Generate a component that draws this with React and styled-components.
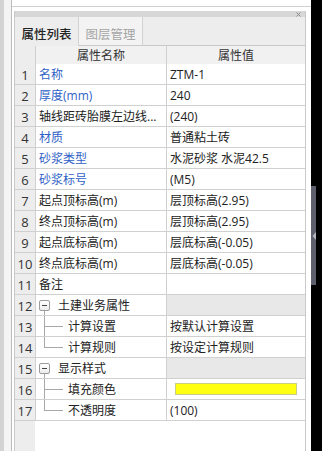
import styled, { createGlobalStyle } from 'styled-components';

const GlobalStyle = createGlobalStyle`
	html, body {
		margin: 0;
		padding: 0;
		background: #fff;
		overflow: hidden;
	}
	body {
		font-family: "Open Sans", "Noto Sans CJK SC", sans-serif;
		font-size: 12px;
		color: #222;
	}
`;

const Screen = styled.div`
	width: 322px;
	height: 451px;
	display: flex;
`;

const Gutter = styled.div`
	width: 4px;
	background: #d3d3d3;
`;

const Side = styled.div`
	width: 7px;
	background: #f4f4f4;
`;

const Main = styled.div`
	flex: 1;
	display: flex;
	flex-direction: column;
	border-left: 1px solid #bcbcbc;
	background: #fff;
`;

const TopBox = styled.div`
	height: 6px;
	border-bottom: 1px solid #d0d0d0;
	background: #fff;
`;

const Panel = styled.div`
	flex: 1;
	margin: 4px 5px 0 2px;
	display: flex;
	flex-direction: column;
	border-left: 1px solid #c9c9c9;
	border-right: 1px solid #c9c9c9;
	min-height: 0;
`;

const TitleBar = styled.div`
	height: 6px;
	background: #d7d7d7;
	display: flex;
	justify-content: flex-end;
	align-items: center;
	padding-right: 4px;
`;

const TabStrip = styled.div`
	height: 29px;
	display: flex;
	background: #ededed;
`;

const Tab = styled.div`
	width: ${props => props.active ? '64px' : '64px'};
	display: flex;
	align-items: center;
	justify-content: center;
	padding-top: 4px;
	box-sizing: border-box;
	font-size: 12.5px;
	font-weight: ${props => props.active ? 500 : 400};
	color: ${props => props.active ? '#222' : '#a5a5a5'};
	background: ${props => props.active ? '#ededed' : '#f3f3f3'};
	border-right: 1px solid #d2d2d2;
	border-bottom: ${props => props.active ? 'none' : '1px solid #c9c9c9'};
`;

const TabRest = styled.div`
	flex: 1;
	border-bottom: 1px solid #c9c9c9;
`;

const Row = styled.div`
	display: grid;
	grid-template-columns: 21px 131px 1fr;
	height: ${props => props.header ? '18px' : '21px'};
	box-sizing: border-box;
	border-bottom: 1px solid #d0d0d0;
`;

const NumCell = styled.div`
	background: #ededed;
	border-right: 1px solid #d0d0d0;
	display: flex;
	align-items: center;
	justify-content: center;
	font-size: 13px;
	color: #333;
	padding-top: 1px;
`;

const HeadCell = styled.div`
	background: #f1f1f1;
	border-right: ${props => props.last ? 'none' : '1px solid #d0d0d0'};
	display: flex;
	align-items: center;
	justify-content: center;
	font-size: 12px;
	color: #333;
`;

const NameCell = styled.div`
	position: relative;
	border-right: 1px solid #d0d0d0;
	display: flex;
	align-items: center;
	padding-left: ${props => props.child ? '32px' : '3px'};
	white-space: nowrap;
	overflow: hidden;
	color: ${props => props.blue ? '#2f5fc6' : '#222'};

	${props => props.child && `
		&::before {
			content: '';
			position: absolute;
			left: 8px;
			top: 0;
			width: 1px;
			height: ${props.lastChild ? '50%' : '100%'};
			background: #a8a8a8;
		}
		&::after {
			content: '';
			position: absolute;
			left: 8px;
			top: 50%;
			width: 19px;
			height: 1px;
			background: #a8a8a8;
		}
	`}

	${props => props.group && `
		&::after {
			content: '';
			position: absolute;
			left: 8px;
			top: calc(50% + 6px);
			bottom: 0;
			width: 1px;
			background: #a8a8a8;
		}
	`}
`;

const Label = styled.span`
	margin-left: ${props => props.offset || 0}px;
`;

const ExpandBox = styled.span`
	width: 11px;
	height: 11px;
	box-sizing: border-box;
	border: 1px solid #9c9c9c;
	border-radius: 2px;
	background: linear-gradient(#ffffff, #ececec);
	display: flex;
	align-items: center;
	justify-content: center;
	flex-shrink: 0;

	&::before {
		content: '';
		width: 5px;
		height: 1px;
		background: #444;
	}
`;

const ValueCell = styled.div`
	display: flex;
	align-items: center;
	padding-left: 3px;
	white-space: nowrap;
	overflow: hidden;
	background: ${props => props.group ? '#e8e8e8' : '#fff'};
`;

const ColorBar = styled.div`
	flex: 1;
	height: 12px;
	margin: 0 8px 0 5px;
	box-sizing: border-box;
	border: 1px solid #cccc88;
	background: #ffff12;
`;

const Filler = styled.div`
	flex: 1;
	display: grid;
	grid-template-columns: 20px 1fr;
`;

const FillerNum = styled.div`
	background: #ededed;
`;

const Rail = styled.div`
	width: 11px;
	background: #000;
	padding-top: 186px;
	box-sizing: border-box;
`;

const Grip = styled.div`
	width: 5px;
	height: 99px;
	background: #5d5f6d;
	display: flex;
	align-items: center;
	justify-content: flex-end;
`;

const rows = [
	{ name: '名称', value: 'ZTM-1', blue: true },
	{ name: '厚度(mm)', value: '240', blue: true },
	{ name: '轴线距砖胎膜左边线...', value: '(240)' },
	{ name: '材质', value: '普通粘土砖', blue: true },
	{ name: '砂浆类型', value: '水泥砂浆 水泥42.5', blue: true },
	{ name: '砂浆标号', value: '(M5)', blue: true },
	{ name: '起点顶标高(m)', value: '层顶标高(2.95)' },
	{ name: '终点顶标高(m)', value: '层顶标高(2.95)' },
	{ name: '起点底标高(m)', value: '层底标高(-0.05)' },
	{ name: '终点底标高(m)', value: '层底标高(-0.05)' },
	{ name: '备注', value: '' },
	{ name: '土建业务属性', value: '', group: true },
	{ name: '计算设置', value: '按默认计算设置', child: true },
	{ name: '计算规则', value: '按设定计算规则', child: true, lastChild: true },
	{ name: '显示样式', value: '', group: true },
	{ name: '填充颜色', color: true, child: true },
	{ name: '不透明度', value: '(100)', child: true, lastChild: true },
];

const App = () => {
	return (
		<>
			<GlobalStyle />
			<Screen>
				<Gutter />
				<Side />
				<Main>
					<TopBox />
					<Panel>
						<TitleBar>
							<svg width="5" height="5" viewBox="0 0 5 5">
								<path d="M0.5 0.5 L4.5 4.5 M4.5 0.5 L0.5 4.5" stroke="#8a8a8a" strokeWidth="1" />
							</svg>
						</TitleBar>
						<TabStrip>
							<Tab active>属性列表</Tab>
							<Tab>图层管理</Tab>
							<TabRest />
						</TabStrip>
						<Row header>
							<NumCell />
							<HeadCell>属性名称</HeadCell>
							<HeadCell last>属性值</HeadCell>
						</Row>
						{rows.map((row, i) => (
							<Row key={i}>
								<NumCell>{i + 1}</NumCell>
								<NameCell
									blue={row.blue}
									child={row.child}
									lastChild={row.lastChild}
									group={row.group}
								>
									{row.group ? (
										<>
											<ExpandBox />
											<Label offset={8}>{row.name}</Label>
										</>
									) : (
										<Label>{row.name}</Label>
									)}
								</NameCell>
								<ValueCell group={row.group}>
									{row.color ? <ColorBar /> : row.value}
								</ValueCell>
							</Row>
						))}
						<Filler>
							<FillerNum />
							<div />
						</Filler>
					</Panel>
				</Main>
				<Rail>
					<Grip>
						<svg width="4" height="8" viewBox="0 0 4 8">
							<path d="M4 0 L0.5 4 L4 8 Z" fill="#b4b6c0" />
						</svg>
					</Grip>
				</Rail>
			</Screen>
		</>
	);
};

export default App;
